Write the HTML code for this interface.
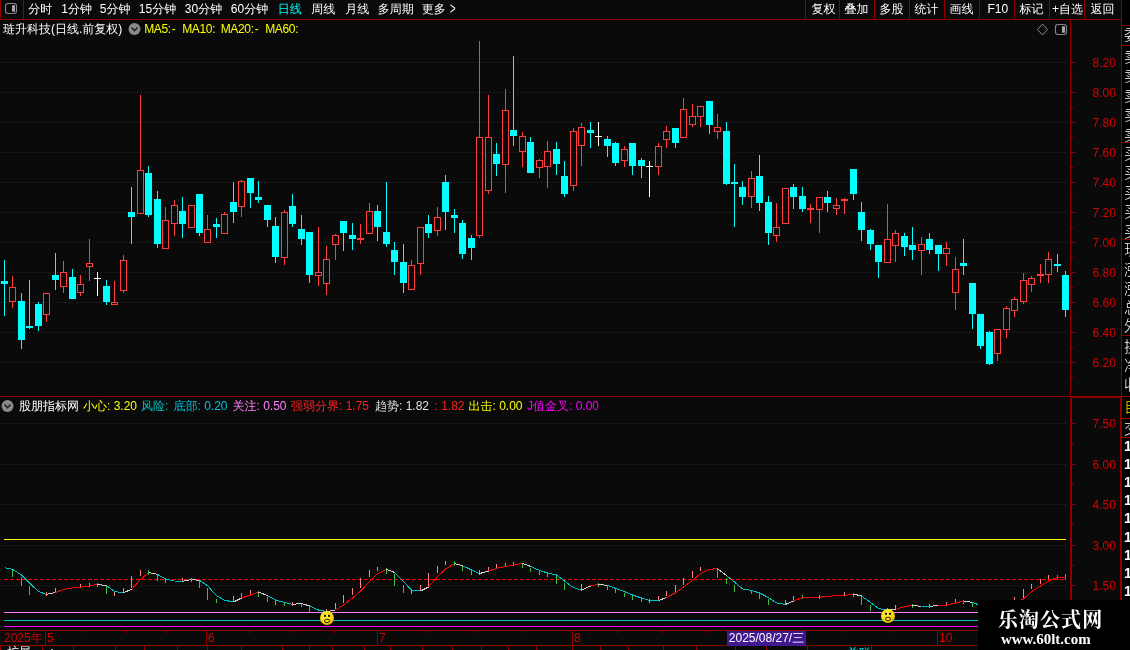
<!DOCTYPE html>
<html lang="zh-CN"><head><meta charset="utf-8"><title>琏升科技 日线</title>
<style>
html,body{margin:0;padding:0;background:#0a0a0a;}
body{width:1130px;height:650px;position:relative;overflow:hidden;font-family:"Liberation Sans","WenQuanYi Zen Hei",sans-serif;}
#chart{position:absolute;left:0;top:0;}
#txt{position:absolute;left:0;top:0;width:1130px;height:650px;will-change:transform;}
.t i{font-style:normal;margin-left:1px}
.t{position:absolute;font-size:12px;line-height:15px;white-space:nowrap;}
#side{position:absolute;left:1122px;top:0;width:8px;height:650px;background:#000;overflow:hidden;}
.s{position:absolute;left:2px;line-height:19px;white-space:nowrap;font-weight:300;font-family:"Liberation Sans","Noto Sans CJK SC",sans-serif;}
#wm{position:absolute;left:978px;top:600px;width:152px;height:50px;background:#000;color:#fff;}
.g{position:absolute;left:0;top:0;width:100%;height:100%;will-change:transform;}
#wm .a{position:absolute;left:19.8px;top:6px;font:bold 20px/28px "Liberation Serif","Noto Serif CJK SC",serif;letter-spacing:1.1px;white-space:nowrap;}
#wm .b{position:absolute;left:23px;top:31px;font:bold 14.95px/17px "Liberation Serif",serif;white-space:nowrap;}
</style></head><body>
<div id="side"><div class="g">
<span class="s" style="top:25px;color:#fff;font-size:15px;">委</span>
<span class="s" style="top:47.0px;color:#fff;font-size:15px;">卖</span>
<span class="s" style="top:66.4px;color:#fff;font-size:15px;">卖</span>
<span class="s" style="top:85.8px;color:#fff;font-size:15px;">卖</span>
<span class="s" style="top:105.19999999999999px;color:#fff;font-size:15px;">卖</span>
<span class="s" style="top:124.6px;color:#fff;font-size:15px;">卖</span>
<span class="s" style="top:144.0px;color:#fff;font-size:15px;">买</span>
<span class="s" style="top:163.4px;color:#fff;font-size:15px;">买</span>
<span class="s" style="top:182.8px;color:#fff;font-size:15px;">买</span>
<span class="s" style="top:202.2px;color:#fff;font-size:15px;">买</span>
<span class="s" style="top:221.6px;color:#fff;font-size:15px;">买</span>
<span class="s" style="top:240px;color:#fff;font-size:15px;">现</span>
<span class="s" style="top:259.5px;color:#fff;font-size:15px;">涨</span>
<span class="s" style="top:279px;color:#fff;font-size:15px;">涨</span>
<span class="s" style="top:298px;color:#fff;font-size:15px;">总</span>
<span class="s" style="top:316px;color:#fff;font-size:15px;">外</span>
<span class="s" style="top:337px;color:#fff;font-size:15px;">换</span>
<span class="s" style="top:356px;color:#fff;font-size:15px;">净</span>
<span class="s" style="top:375px;color:#fff;font-size:15px;">收</span>
<span class="s" style="top:397px;color:#e8e800;font-size:15px;">自</span>
<span class="s" style="top:418.5px;color:#fff;font-size:15px;">交</span>
<span class="s" style="top:437.0px;color:#fff;font-size:14px;font-weight:bold;">1</span>
<span class="s" style="top:455.1px;color:#fff;font-size:14px;font-weight:bold;">1</span>
<span class="s" style="top:473.2px;color:#fff;font-size:14px;font-weight:bold;">1</span>
<span class="s" style="top:491.3px;color:#fff;font-size:14px;font-weight:bold;">1</span>
<span class="s" style="top:509.4px;color:#fff;font-size:14px;font-weight:bold;">1</span>
<span class="s" style="top:527.5px;color:#fff;font-size:14px;font-weight:bold;">1</span>
<span class="s" style="top:545.6px;color:#fff;font-size:14px;font-weight:bold;">1</span>
<span class="s" style="top:563.7px;color:#fff;font-size:14px;font-weight:bold;">1</span>
<span class="s" style="top:581.8px;color:#fff;font-size:14px;font-weight:bold;">1</span>
</div></div>
<svg id="chart" width="1130" height="650" viewBox="0 0 1130 650">
<g stroke="#a00000" stroke-width="1" stroke-dasharray="1 3" shape-rendering="crispEdges">
<line x1="1" y1="62.5" x2="1067" y2="62.5"/>
<line x1="1" y1="92.5" x2="1067" y2="92.5"/>
<line x1="1" y1="122.5" x2="1067" y2="122.5"/>
<line x1="1" y1="152.5" x2="1067" y2="152.5"/>
<line x1="1" y1="182.5" x2="1067" y2="182.5"/>
<line x1="1" y1="212.5" x2="1067" y2="212.5"/>
<line x1="1" y1="242.5" x2="1067" y2="242.5"/>
<line x1="1" y1="272.5" x2="1067" y2="272.5"/>
<line x1="1" y1="302.5" x2="1067" y2="302.5"/>
<line x1="1" y1="332.5" x2="1067" y2="332.5"/>
<line x1="1" y1="362.5" x2="1067" y2="362.5"/>
<line x1="1" y1="423.5" x2="1067" y2="423.5"/>
<line x1="1" y1="464.5" x2="1067" y2="464.5"/>
<line x1="1" y1="504.5" x2="1067" y2="504.5"/>
<line x1="1" y1="545.5" x2="1067" y2="545.5"/>
<line x1="1" y1="585.5" x2="1067" y2="585.5"/>
</g>
<g fill="#8c0000" shape-rendering="crispEdges">
<rect x="0" y="19" width="1122" height="1" fill="#8c0000"/>
<rect x="0" y="0" width="1" height="20" fill="#8c0000"/>
<rect x="23" y="0" width="1" height="20" fill="#8c0000"/>
<rect x="805" y="0" width="1" height="20" fill="#8c0000"/>
<rect x="839" y="0" width="1" height="20" fill="#8c0000"/>
<rect x="874" y="0" width="1" height="20" fill="#8c0000"/>
<rect x="909" y="0" width="1" height="20" fill="#8c0000"/>
<rect x="944" y="0" width="1" height="20" fill="#8c0000"/>
<rect x="979" y="0" width="1" height="20" fill="#8c0000"/>
<rect x="1014" y="0" width="1" height="20" fill="#8c0000"/>
<rect x="1049" y="0" width="1" height="20" fill="#8c0000"/>
<rect x="1084" y="0" width="1" height="20" fill="#8c0000"/>
<rect x="1121" y="0" width="1" height="396" fill="#8c0000"/>
<rect x="1070" y="20" width="1" height="376" fill="#8c0000"/>
<rect x="1071" y="62" width="5" height="1" fill="#8c0000"/>
<rect x="1071" y="77" width="2" height="1" fill="#8c0000"/>
<rect x="1071" y="92" width="5" height="1" fill="#8c0000"/>
<rect x="1071" y="107" width="2" height="1" fill="#8c0000"/>
<rect x="1071" y="122" width="5" height="1" fill="#8c0000"/>
<rect x="1071" y="137" width="2" height="1" fill="#8c0000"/>
<rect x="1071" y="152" width="5" height="1" fill="#8c0000"/>
<rect x="1071" y="167" width="2" height="1" fill="#8c0000"/>
<rect x="1071" y="182" width="5" height="1" fill="#8c0000"/>
<rect x="1071" y="197" width="2" height="1" fill="#8c0000"/>
<rect x="1071" y="212" width="5" height="1" fill="#8c0000"/>
<rect x="1071" y="227" width="2" height="1" fill="#8c0000"/>
<rect x="1071" y="242" width="5" height="1" fill="#8c0000"/>
<rect x="1071" y="257" width="2" height="1" fill="#8c0000"/>
<rect x="1071" y="272" width="5" height="1" fill="#8c0000"/>
<rect x="1071" y="287" width="2" height="1" fill="#8c0000"/>
<rect x="1071" y="302" width="5" height="1" fill="#8c0000"/>
<rect x="1071" y="317" width="2" height="1" fill="#8c0000"/>
<rect x="1071" y="332" width="5" height="1" fill="#8c0000"/>
<rect x="1071" y="347" width="2" height="1" fill="#8c0000"/>
<rect x="1071" y="362" width="5" height="1" fill="#8c0000"/>
<rect x="1071" y="377" width="2" height="1" fill="#8c0000"/>
<rect x="0" y="396" width="1130" height="1" fill="#8c0000"/>
<rect x="1071" y="397" width="51" height="1" fill="#8c0000"/>
<rect x="1070" y="398" width="2" height="252" fill="#8c0000"/>
<rect x="1120" y="398" width="2" height="252" fill="#8c0000"/>
<rect x="1072" y="423" width="4" height="1" fill="#8c0000"/>
<rect x="1072" y="443" width="2" height="1" fill="#8c0000"/>
<rect x="1072" y="464" width="4" height="1" fill="#8c0000"/>
<rect x="1072" y="484" width="2" height="1" fill="#8c0000"/>
<rect x="1072" y="504" width="4" height="1" fill="#8c0000"/>
<rect x="1072" y="524" width="2" height="1" fill="#8c0000"/>
<rect x="1072" y="545" width="4" height="1" fill="#8c0000"/>
<rect x="1072" y="565" width="2" height="1" fill="#8c0000"/>
<rect x="1072" y="585" width="4" height="1" fill="#8c0000"/>
<rect x="1072" y="605" width="2" height="1" fill="#8c0000"/>
<rect x="0" y="630" width="1130" height="1" fill="#8c0000"/>
<rect x="0" y="645" width="1130" height="1" fill="#8c0000"/>
<rect x="45" y="630" width="1" height="16" fill="#8c0000"/>
<rect x="206" y="630" width="1" height="16" fill="#8c0000"/>
<rect x="377" y="630" width="1" height="16" fill="#8c0000"/>
<rect x="572" y="630" width="1" height="16" fill="#8c0000"/>
<rect x="937" y="630" width="1" height="16" fill="#8c0000"/>
<rect x="85" y="631" width="1" height="2" fill="#8c0000"/>
<rect x="126" y="631" width="1" height="2" fill="#8c0000"/>
<rect x="166" y="631" width="1" height="2" fill="#8c0000"/>
<rect x="249" y="631" width="1" height="2" fill="#8c0000"/>
<rect x="292" y="631" width="1" height="2" fill="#8c0000"/>
<rect x="334" y="631" width="1" height="2" fill="#8c0000"/>
<rect x="426" y="631" width="1" height="2" fill="#8c0000"/>
<rect x="474" y="631" width="1" height="2" fill="#8c0000"/>
<rect x="523" y="631" width="1" height="2" fill="#8c0000"/>
<rect x="617" y="631" width="1" height="2" fill="#8c0000"/>
<rect x="662" y="631" width="1" height="2" fill="#8c0000"/>
<rect x="706" y="631" width="1" height="2" fill="#8c0000"/>
<rect x="845" y="631" width="1" height="2" fill="#8c0000"/>
<rect x="891" y="631" width="1" height="2" fill="#8c0000"/>
<rect x="0" y="646" width="1" height="4" fill="#8c0000"/>
<rect x="42" y="646" width="1" height="4" fill="#8c0000"/>
<rect x="73" y="646" width="1" height="4" fill="#8c0000"/>
<rect x="115" y="646" width="1" height="4" fill="#8c0000"/>
<rect x="144" y="646" width="1" height="4" fill="#8c0000"/>
<rect x="177" y="646" width="1" height="4" fill="#8c0000"/>
<rect x="207" y="646" width="1" height="4" fill="#8c0000"/>
<rect x="241" y="646" width="1" height="4" fill="#8c0000"/>
<rect x="282" y="646" width="1" height="4" fill="#8c0000"/>
<rect x="309" y="646" width="1" height="4" fill="#8c0000"/>
<rect x="332" y="646" width="1" height="4" fill="#8c0000"/>
<rect x="364" y="646" width="1" height="4" fill="#8c0000"/>
<rect x="390" y="646" width="1" height="4" fill="#8c0000"/>
<rect x="422" y="646" width="1" height="4" fill="#8c0000"/>
<rect x="452" y="646" width="1" height="4" fill="#8c0000"/>
<rect x="481" y="646" width="1" height="4" fill="#8c0000"/>
<rect x="508" y="646" width="1" height="4" fill="#8c0000"/>
<rect x="536" y="646" width="1" height="4" fill="#8c0000"/>
<rect x="572" y="646" width="1" height="4" fill="#8c0000"/>
<rect x="600" y="646" width="1" height="4" fill="#8c0000"/>
<rect x="628" y="646" width="1" height="4" fill="#8c0000"/>
<rect x="663" y="646" width="1" height="4" fill="#8c0000"/>
<rect x="696" y="646" width="1" height="4" fill="#8c0000"/>
<rect x="735" y="646" width="1" height="4" fill="#8c0000"/>
<rect x="766" y="646" width="1" height="4" fill="#8c0000"/>
<rect x="807" y="646" width="1" height="4" fill="#8c0000"/>
<rect x="871" y="646" width="1" height="4" fill="#8c0000"/>
<rect x="1122" y="25" width="8" height="1" fill="#8c0000"/>
<rect x="1122" y="45" width="8" height="1" fill="#8c0000"/>
<rect x="1122" y="142" width="8" height="1" fill="#8c0000"/>
<rect x="1122" y="239" width="8" height="1" fill="#8c0000"/>
<rect x="1122" y="335" width="8" height="1" fill="#8c0000"/>
<rect x="1122" y="396" width="8" height="1" fill="#8c0000"/>
<rect x="1122" y="418" width="8" height="1" fill="#8c0000"/>
<rect x="1122" y="437" width="8" height="1" fill="#8c0000"/>
</g>
<g shape-rendering="crispEdges">
<rect x="4" y="260" width="1" height="56" fill="#00ffff"/>
<rect x="1" y="281" width="7" height="3" fill="#00ffff"/>
<rect x="12" y="276" width="1" height="11" fill="#ff3d3d"/>
<rect x="12" y="302" width="1" height="6" fill="#ff3d3d"/>
<rect x="9.5" y="287.5" width="6" height="14" fill="none" stroke="#ff3d3d" stroke-width="1"/>
<rect x="21" y="293" width="1" height="56" fill="#00ffff"/>
<rect x="18" y="301" width="7" height="39" fill="#00ffff"/>
<rect x="29" y="280" width="1" height="49" fill="#00ffff"/>
<rect x="26" y="326" width="7" height="2" fill="#00ffff"/>
<rect x="38" y="302" width="1" height="29" fill="#00ffff"/>
<rect x="35" y="304" width="7" height="22" fill="#00ffff"/>
<rect x="46" y="315" width="1" height="7" fill="#ff3d3d"/>
<rect x="43.5" y="293.5" width="6" height="21" fill="none" stroke="#ff3d3d" stroke-width="1"/>
<rect x="55" y="253" width="1" height="37" fill="#00ffff"/>
<rect x="52" y="275" width="7" height="5" fill="#00ffff"/>
<rect x="63" y="261" width="1" height="11" fill="#ff3d3d"/>
<rect x="63" y="287" width="1" height="6" fill="#ff3d3d"/>
<rect x="60.5" y="272.5" width="6" height="14" fill="none" stroke="#ff3d3d" stroke-width="1"/>
<rect x="72" y="269" width="1" height="30" fill="#00ffff"/>
<rect x="69" y="277" width="7" height="22" fill="#00ffff"/>
<rect x="80" y="275" width="1" height="9" fill="#ff3d3d"/>
<rect x="80" y="293" width="1" height="3" fill="#ff3d3d"/>
<rect x="77.5" y="284.5" width="6" height="8" fill="none" stroke="#ff3d3d" stroke-width="1"/>
<rect x="89" y="239" width="1" height="24" fill="#ff3d3d"/>
<rect x="89" y="267" width="1" height="14" fill="#ff3d3d"/>
<rect x="86.5" y="263.5" width="6" height="3" fill="none" stroke="#ff3d3d" stroke-width="1"/>
<rect x="97" y="272" width="1" height="24" fill="#ffffff"/>
<rect x="94" y="278" width="7" height="1" fill="#ffffff"/>
<rect x="106" y="280" width="1" height="25" fill="#00ffff"/>
<rect x="103" y="286" width="7" height="16" fill="#00ffff"/>
<rect x="114" y="281" width="1" height="21" fill="#ff3d3d"/>
<rect x="111.5" y="302.5" width="6" height="2" fill="none" stroke="#ff3d3d" stroke-width="1"/>
<rect x="123" y="255" width="1" height="5" fill="#ff3d3d"/>
<rect x="123" y="291" width="1" height="2" fill="#ff3d3d"/>
<rect x="120.5" y="260.5" width="6" height="30" fill="none" stroke="#ff3d3d" stroke-width="1"/>
<rect x="131" y="187" width="1" height="57" fill="#00ffff"/>
<rect x="128" y="212" width="7" height="5" fill="#00ffff"/>
<rect x="140" y="95" width="1" height="75" fill="#ff3d3d"/>
<rect x="137.5" y="170.5" width="6" height="43" fill="none" stroke="#ff3d3d" stroke-width="1"/>
<rect x="148" y="166" width="1" height="51" fill="#00ffff"/>
<rect x="145" y="173" width="7" height="42" fill="#00ffff"/>
<rect x="157" y="191" width="1" height="57" fill="#00ffff"/>
<rect x="154" y="199" width="7" height="45" fill="#00ffff"/>
<rect x="165" y="207" width="1" height="13" fill="#ff3d3d"/>
<rect x="162.5" y="220.5" width="6" height="28" fill="none" stroke="#ff3d3d" stroke-width="1"/>
<rect x="174" y="200" width="1" height="5" fill="#ff3d3d"/>
<rect x="174" y="224" width="1" height="12" fill="#ff3d3d"/>
<rect x="171.5" y="205.5" width="6" height="18" fill="none" stroke="#ff3d3d" stroke-width="1"/>
<rect x="182" y="197" width="1" height="41" fill="#00ffff"/>
<rect x="179" y="211" width="7" height="13" fill="#00ffff"/>
<rect x="188.5" y="205.5" width="6" height="22" fill="none" stroke="#ff3d3d" stroke-width="1"/>
<rect x="199" y="194" width="1" height="42" fill="#00ffff"/>
<rect x="196" y="194" width="7" height="39" fill="#00ffff"/>
<rect x="207" y="215" width="1" height="14" fill="#ff3d3d"/>
<rect x="204.5" y="229.5" width="6" height="13" fill="none" stroke="#ff3d3d" stroke-width="1"/>
<rect x="216" y="218" width="1" height="20" fill="#00ffff"/>
<rect x="213" y="224" width="7" height="3" fill="#00ffff"/>
<rect x="224" y="212" width="1" height="2" fill="#ff3d3d"/>
<rect x="221.5" y="214.5" width="6" height="19" fill="none" stroke="#ff3d3d" stroke-width="1"/>
<rect x="233" y="182" width="1" height="41" fill="#00ffff"/>
<rect x="230" y="202" width="7" height="10" fill="#00ffff"/>
<rect x="241" y="180" width="1" height="1" fill="#ff3d3d"/>
<rect x="241" y="207" width="1" height="10" fill="#ff3d3d"/>
<rect x="238.5" y="181.5" width="6" height="25" fill="none" stroke="#ff3d3d" stroke-width="1"/>
<rect x="250" y="178" width="1" height="30" fill="#00ffff"/>
<rect x="247" y="178" width="7" height="15" fill="#00ffff"/>
<rect x="258" y="181" width="1" height="22" fill="#00ffff"/>
<rect x="255" y="197" width="7" height="3" fill="#00ffff"/>
<rect x="267" y="205" width="1" height="22" fill="#00ffff"/>
<rect x="264" y="205" width="7" height="15" fill="#00ffff"/>
<rect x="275" y="217" width="1" height="46" fill="#00ffff"/>
<rect x="272" y="226" width="7" height="31" fill="#00ffff"/>
<rect x="284" y="210" width="1" height="2" fill="#ff3d3d"/>
<rect x="284" y="258" width="1" height="7" fill="#ff3d3d"/>
<rect x="281.5" y="212.5" width="6" height="45" fill="none" stroke="#ff3d3d" stroke-width="1"/>
<rect x="292" y="194" width="1" height="33" fill="#00ffff"/>
<rect x="289" y="206" width="7" height="18" fill="#00ffff"/>
<rect x="301" y="215" width="1" height="30" fill="#00ffff"/>
<rect x="298" y="229" width="7" height="10" fill="#00ffff"/>
<rect x="309" y="232" width="1" height="51" fill="#00ffff"/>
<rect x="306" y="232" width="7" height="43" fill="#00ffff"/>
<rect x="318" y="227" width="1" height="45" fill="#ff3d3d"/>
<rect x="318" y="276" width="1" height="10" fill="#ff3d3d"/>
<rect x="315.5" y="272.5" width="6" height="3" fill="none" stroke="#ff3d3d" stroke-width="1"/>
<rect x="326" y="246" width="1" height="13" fill="#ff3d3d"/>
<rect x="326" y="284" width="1" height="11" fill="#ff3d3d"/>
<rect x="323.5" y="259.5" width="6" height="24" fill="none" stroke="#ff3d3d" stroke-width="1"/>
<rect x="335" y="234" width="1" height="1" fill="#ff3d3d"/>
<rect x="335" y="245" width="1" height="15" fill="#ff3d3d"/>
<rect x="332.5" y="235.5" width="6" height="9" fill="none" stroke="#ff3d3d" stroke-width="1"/>
<rect x="343" y="221" width="1" height="30" fill="#00ffff"/>
<rect x="340" y="221" width="7" height="12" fill="#00ffff"/>
<rect x="352" y="223" width="1" height="27" fill="#00ffff"/>
<rect x="349" y="235" width="7" height="4" fill="#00ffff"/>
<rect x="360" y="224" width="1" height="20" fill="#ff3d3d"/>
<rect x="357" y="238" width="7" height="2" fill="#ff3d3d"/>
<rect x="369" y="203" width="1" height="8" fill="#ff3d3d"/>
<rect x="366.5" y="211.5" width="6" height="22" fill="none" stroke="#ff3d3d" stroke-width="1"/>
<rect x="377" y="205" width="1" height="36" fill="#00ffff"/>
<rect x="374" y="211" width="7" height="16" fill="#00ffff"/>
<rect x="386" y="182" width="1" height="65" fill="#00ffff"/>
<rect x="383" y="232" width="7" height="12" fill="#00ffff"/>
<rect x="394" y="242" width="1" height="33" fill="#00ffff"/>
<rect x="391" y="250" width="7" height="12" fill="#00ffff"/>
<rect x="403" y="244" width="1" height="49" fill="#00ffff"/>
<rect x="400" y="262" width="7" height="21" fill="#00ffff"/>
<rect x="411" y="260" width="1" height="5" fill="#ff3d3d"/>
<rect x="408.5" y="265.5" width="6" height="24" fill="none" stroke="#ff3d3d" stroke-width="1"/>
<rect x="420" y="264" width="1" height="11" fill="#ff3d3d"/>
<rect x="417.5" y="227.5" width="6" height="36" fill="none" stroke="#ff3d3d" stroke-width="1"/>
<rect x="428" y="215" width="1" height="23" fill="#00ffff"/>
<rect x="425" y="224" width="7" height="9" fill="#00ffff"/>
<rect x="437" y="207" width="1" height="10" fill="#ff3d3d"/>
<rect x="437" y="231" width="1" height="5" fill="#ff3d3d"/>
<rect x="434.5" y="217.5" width="6" height="13" fill="none" stroke="#ff3d3d" stroke-width="1"/>
<rect x="445" y="175" width="1" height="55" fill="#00ffff"/>
<rect x="442" y="182" width="7" height="30" fill="#00ffff"/>
<rect x="454" y="209" width="1" height="24" fill="#00ffff"/>
<rect x="451" y="215" width="7" height="3" fill="#00ffff"/>
<rect x="462" y="220" width="1" height="39" fill="#00ffff"/>
<rect x="459" y="223" width="7" height="31" fill="#00ffff"/>
<rect x="471" y="235" width="1" height="25" fill="#00ffff"/>
<rect x="468" y="238" width="7" height="10" fill="#00ffff"/>
<rect x="479" y="41" width="1" height="96" fill="#ff3d3d"/>
<rect x="479" y="236" width="1" height="2" fill="#ff3d3d"/>
<rect x="476.5" y="137.5" width="6" height="98" fill="none" stroke="#ff3d3d" stroke-width="1"/>
<rect x="488" y="95" width="1" height="42" fill="#ff3d3d"/>
<rect x="488" y="191" width="1" height="3" fill="#ff3d3d"/>
<rect x="485.5" y="137.5" width="6" height="53" fill="none" stroke="#ff3d3d" stroke-width="1"/>
<rect x="496" y="143" width="1" height="33" fill="#00ffff"/>
<rect x="493" y="154" width="7" height="10" fill="#00ffff"/>
<rect x="505" y="89" width="1" height="21" fill="#ff3d3d"/>
<rect x="505" y="165" width="1" height="28" fill="#ff3d3d"/>
<rect x="502.5" y="110.5" width="6" height="54" fill="none" stroke="#ff3d3d" stroke-width="1"/>
<rect x="513" y="56" width="1" height="90" fill="#00ffff"/>
<rect x="510" y="130" width="7" height="6" fill="#00ffff"/>
<rect x="522" y="132" width="1" height="4" fill="#ff3d3d"/>
<rect x="522" y="152" width="1" height="15" fill="#ff3d3d"/>
<rect x="519.5" y="136.5" width="6" height="15" fill="none" stroke="#ff3d3d" stroke-width="1"/>
<rect x="530" y="137" width="1" height="36" fill="#00ffff"/>
<rect x="527" y="142" width="7" height="31" fill="#00ffff"/>
<rect x="539" y="159" width="1" height="1" fill="#ff3d3d"/>
<rect x="539" y="168" width="1" height="10" fill="#ff3d3d"/>
<rect x="536.5" y="160.5" width="6" height="7" fill="none" stroke="#ff3d3d" stroke-width="1"/>
<rect x="547" y="141" width="1" height="10" fill="#ff3d3d"/>
<rect x="547" y="167" width="1" height="21" fill="#ff3d3d"/>
<rect x="544.5" y="151.5" width="6" height="15" fill="none" stroke="#ff3d3d" stroke-width="1"/>
<rect x="556" y="142" width="1" height="33" fill="#00ffff"/>
<rect x="553" y="149" width="7" height="15" fill="#00ffff"/>
<rect x="564" y="161" width="1" height="36" fill="#00ffff"/>
<rect x="561" y="176" width="7" height="18" fill="#00ffff"/>
<rect x="573" y="128" width="1" height="3" fill="#ff3d3d"/>
<rect x="573" y="186" width="1" height="5" fill="#ff3d3d"/>
<rect x="570.5" y="131.5" width="6" height="54" fill="none" stroke="#ff3d3d" stroke-width="1"/>
<rect x="581" y="123" width="1" height="4" fill="#ff3d3d"/>
<rect x="581" y="146" width="1" height="20" fill="#ff3d3d"/>
<rect x="578.5" y="127.5" width="6" height="18" fill="none" stroke="#ff3d3d" stroke-width="1"/>
<rect x="590" y="122" width="1" height="26" fill="#00ffff"/>
<rect x="587" y="130" width="7" height="3" fill="#00ffff"/>
<rect x="598" y="122" width="1" height="24" fill="#ffffff"/>
<rect x="595" y="136" width="7" height="1" fill="#ffffff"/>
<rect x="607" y="136" width="1" height="21" fill="#00ffff"/>
<rect x="604" y="139" width="7" height="7" fill="#00ffff"/>
<rect x="615" y="142" width="1" height="24" fill="#00ffff"/>
<rect x="612" y="143" width="7" height="20" fill="#00ffff"/>
<rect x="624" y="146" width="1" height="3" fill="#ff3d3d"/>
<rect x="624" y="161" width="1" height="6" fill="#ff3d3d"/>
<rect x="621.5" y="149.5" width="6" height="11" fill="none" stroke="#ff3d3d" stroke-width="1"/>
<rect x="632" y="143" width="1" height="32" fill="#00ffff"/>
<rect x="629" y="143" width="7" height="23" fill="#00ffff"/>
<rect x="641" y="158" width="1" height="20" fill="#00ffff"/>
<rect x="638" y="160" width="7" height="6" fill="#00ffff"/>
<rect x="649" y="161" width="1" height="36" fill="#ffffff"/>
<rect x="646" y="166" width="7" height="1" fill="#ffffff"/>
<rect x="658" y="143" width="1" height="3" fill="#ff3d3d"/>
<rect x="658" y="167" width="1" height="8" fill="#ff3d3d"/>
<rect x="655.5" y="146.5" width="6" height="20" fill="none" stroke="#ff3d3d" stroke-width="1"/>
<rect x="666" y="126" width="1" height="5" fill="#ff3d3d"/>
<rect x="666" y="140" width="1" height="8" fill="#ff3d3d"/>
<rect x="663.5" y="131.5" width="6" height="8" fill="none" stroke="#ff3d3d" stroke-width="1"/>
<rect x="675" y="128" width="1" height="20" fill="#00ffff"/>
<rect x="672" y="128" width="7" height="15" fill="#00ffff"/>
<rect x="683" y="98" width="1" height="11" fill="#ff3d3d"/>
<rect x="680.5" y="109.5" width="6" height="28" fill="none" stroke="#ff3d3d" stroke-width="1"/>
<rect x="692" y="104" width="1" height="12" fill="#ff3d3d"/>
<rect x="692" y="125" width="1" height="2" fill="#ff3d3d"/>
<rect x="689.5" y="116.5" width="6" height="8" fill="none" stroke="#ff3d3d" stroke-width="1"/>
<rect x="700" y="117" width="1" height="10" fill="#ff3d3d"/>
<rect x="697.5" y="106.5" width="6" height="10" fill="none" stroke="#ff3d3d" stroke-width="1"/>
<rect x="709" y="101" width="1" height="33" fill="#00ffff"/>
<rect x="706" y="101" width="7" height="24" fill="#00ffff"/>
<rect x="717" y="114" width="1" height="13" fill="#ff3d3d"/>
<rect x="717" y="132" width="1" height="7" fill="#ff3d3d"/>
<rect x="714.5" y="127.5" width="6" height="4" fill="none" stroke="#ff3d3d" stroke-width="1"/>
<rect x="726" y="122" width="1" height="63" fill="#00ffff"/>
<rect x="723" y="131" width="7" height="53" fill="#00ffff"/>
<rect x="734" y="164" width="1" height="63" fill="#00ffff"/>
<rect x="731" y="182" width="7" height="2" fill="#00ffff"/>
<rect x="742" y="181" width="1" height="24" fill="#00ffff"/>
<rect x="739" y="187" width="7" height="10" fill="#00ffff"/>
<rect x="751" y="171" width="1" height="7" fill="#ff3d3d"/>
<rect x="751" y="197" width="1" height="11" fill="#ff3d3d"/>
<rect x="748.5" y="178.5" width="6" height="18" fill="none" stroke="#ff3d3d" stroke-width="1"/>
<rect x="759" y="155" width="1" height="56" fill="#00ffff"/>
<rect x="756" y="176" width="7" height="27" fill="#00ffff"/>
<rect x="768" y="196" width="1" height="49" fill="#00ffff"/>
<rect x="765" y="202" width="7" height="31" fill="#00ffff"/>
<rect x="776" y="203" width="1" height="24" fill="#ff3d3d"/>
<rect x="776" y="236" width="1" height="6" fill="#ff3d3d"/>
<rect x="773.5" y="227.5" width="6" height="8" fill="none" stroke="#ff3d3d" stroke-width="1"/>
<rect x="782.5" y="188.5" width="6" height="35" fill="none" stroke="#ff3d3d" stroke-width="1"/>
<rect x="793" y="184" width="1" height="25" fill="#00ffff"/>
<rect x="790" y="187" width="7" height="10" fill="#00ffff"/>
<rect x="802" y="187" width="1" height="25" fill="#00ffff"/>
<rect x="799" y="196" width="7" height="13" fill="#00ffff"/>
<rect x="810" y="204" width="1" height="19" fill="#ff3d3d"/>
<rect x="807" y="208" width="7" height="2" fill="#ff3d3d"/>
<rect x="819" y="210" width="1" height="23" fill="#ff3d3d"/>
<rect x="816.5" y="197.5" width="6" height="12" fill="none" stroke="#ff3d3d" stroke-width="1"/>
<rect x="827" y="191" width="1" height="21" fill="#00ffff"/>
<rect x="824" y="197" width="7" height="6" fill="#00ffff"/>
<rect x="836" y="198" width="1" height="7" fill="#ff3d3d"/>
<rect x="836" y="209" width="1" height="6" fill="#ff3d3d"/>
<rect x="833.5" y="205.5" width="6" height="3" fill="none" stroke="#ff3d3d" stroke-width="1"/>
<rect x="844" y="198" width="1" height="16" fill="#ff3d3d"/>
<rect x="841" y="199" width="7" height="2" fill="#ff3d3d"/>
<rect x="853" y="169" width="1" height="31" fill="#00ffff"/>
<rect x="850" y="169" width="7" height="25" fill="#00ffff"/>
<rect x="861" y="202" width="1" height="39" fill="#00ffff"/>
<rect x="858" y="212" width="7" height="18" fill="#00ffff"/>
<rect x="870" y="229" width="1" height="21" fill="#00ffff"/>
<rect x="867" y="230" width="7" height="14" fill="#00ffff"/>
<rect x="878" y="245" width="1" height="33" fill="#00ffff"/>
<rect x="875" y="245" width="7" height="17" fill="#00ffff"/>
<rect x="887" y="204" width="1" height="35" fill="#ff3d3d"/>
<rect x="884.5" y="239.5" width="6" height="23" fill="none" stroke="#ff3d3d" stroke-width="1"/>
<rect x="895" y="230" width="1" height="3" fill="#ff3d3d"/>
<rect x="895" y="246" width="1" height="16" fill="#ff3d3d"/>
<rect x="892.5" y="233.5" width="6" height="12" fill="none" stroke="#ff3d3d" stroke-width="1"/>
<rect x="904" y="233" width="1" height="23" fill="#00ffff"/>
<rect x="901" y="236" width="7" height="11" fill="#00ffff"/>
<rect x="912" y="227" width="1" height="33" fill="#00ffff"/>
<rect x="909" y="245" width="7" height="5" fill="#00ffff"/>
<rect x="921" y="237" width="1" height="7" fill="#ff3d3d"/>
<rect x="921" y="251" width="1" height="24" fill="#ff3d3d"/>
<rect x="918.5" y="244.5" width="6" height="6" fill="none" stroke="#ff3d3d" stroke-width="1"/>
<rect x="929" y="233" width="1" height="21" fill="#00ffff"/>
<rect x="926" y="239" width="7" height="11" fill="#00ffff"/>
<rect x="938" y="245" width="1" height="26" fill="#00ffff"/>
<rect x="935" y="245" width="7" height="9" fill="#00ffff"/>
<rect x="946" y="242" width="1" height="6" fill="#ff3d3d"/>
<rect x="946" y="254" width="1" height="12" fill="#ff3d3d"/>
<rect x="943.5" y="248.5" width="6" height="5" fill="none" stroke="#ff3d3d" stroke-width="1"/>
<rect x="955" y="257" width="1" height="12" fill="#ff3d3d"/>
<rect x="955" y="293" width="1" height="17" fill="#ff3d3d"/>
<rect x="952.5" y="269.5" width="6" height="23" fill="none" stroke="#ff3d3d" stroke-width="1"/>
<rect x="963" y="239" width="1" height="36" fill="#00ffff"/>
<rect x="960" y="263" width="7" height="3" fill="#00ffff"/>
<rect x="972" y="283" width="1" height="46" fill="#00ffff"/>
<rect x="969" y="283" width="7" height="31" fill="#00ffff"/>
<rect x="980" y="314" width="1" height="35" fill="#00ffff"/>
<rect x="977" y="314" width="7" height="32" fill="#00ffff"/>
<rect x="989" y="331" width="1" height="34" fill="#00ffff"/>
<rect x="986" y="332" width="7" height="32" fill="#00ffff"/>
<rect x="997" y="354" width="1" height="7" fill="#ff3d3d"/>
<rect x="994.5" y="329.5" width="6" height="24" fill="none" stroke="#ff3d3d" stroke-width="1"/>
<rect x="1006" y="306" width="1" height="2" fill="#ff3d3d"/>
<rect x="1006" y="330" width="1" height="8" fill="#ff3d3d"/>
<rect x="1003.5" y="308.5" width="6" height="21" fill="none" stroke="#ff3d3d" stroke-width="1"/>
<rect x="1014" y="297" width="1" height="2" fill="#ff3d3d"/>
<rect x="1014" y="311" width="1" height="6" fill="#ff3d3d"/>
<rect x="1011.5" y="299.5" width="6" height="11" fill="none" stroke="#ff3d3d" stroke-width="1"/>
<rect x="1023" y="273" width="1" height="7" fill="#ff3d3d"/>
<rect x="1023" y="302" width="1" height="2" fill="#ff3d3d"/>
<rect x="1020.5" y="280.5" width="6" height="21" fill="none" stroke="#ff3d3d" stroke-width="1"/>
<rect x="1031" y="276" width="1" height="2" fill="#ff3d3d"/>
<rect x="1031" y="285" width="1" height="7" fill="#ff3d3d"/>
<rect x="1028.5" y="278.5" width="6" height="6" fill="none" stroke="#ff3d3d" stroke-width="1"/>
<rect x="1040" y="264" width="1" height="19" fill="#ff3d3d"/>
<rect x="1037" y="274" width="7" height="2" fill="#ff3d3d"/>
<rect x="1048" y="252" width="1" height="7" fill="#ff3d3d"/>
<rect x="1048" y="275" width="1" height="8" fill="#ff3d3d"/>
<rect x="1045.5" y="259.5" width="6" height="15" fill="none" stroke="#ff3d3d" stroke-width="1"/>
<rect x="1057" y="254" width="1" height="18" fill="#00ffff"/>
<rect x="1054" y="264" width="7" height="2" fill="#00ffff"/>
<rect x="1065" y="271" width="1" height="46" fill="#00ffff"/>
<rect x="1062" y="275" width="7" height="35" fill="#00ffff"/>
</g>
<g shape-rendering="crispEdges">
<rect x="4" y="539" width="1062" height="1" fill="#ffff00"/>
<rect x="4" y="612" width="1062" height="1" fill="#ff80ff"/>
<rect x="4" y="620" width="1062" height="1" fill="#00c0c0"/>
<rect x="4" y="626" width="1062" height="1" fill="#ff00ff"/>
</g>
<line x1="4" y1="579.5" x2="1066" y2="579.5" stroke="#ff0000" stroke-width="1" stroke-dasharray="4 2" shape-rendering="crispEdges"/>
<g shape-rendering="crispEdges">
<rect x="12" y="570" width="1" height="7" fill="#40c040"/>
<rect x="21" y="577" width="1" height="9" fill="#40c040"/>
<rect x="29" y="586" width="1" height="9" fill="#40c040"/>
<rect x="46" y="592" width="1" height="4" fill="#ff8080"/>
<rect x="55" y="588" width="1" height="4" fill="#ff8080"/>
<rect x="80" y="584" width="1" height="4" fill="#ff8080"/>
<rect x="89" y="583" width="1" height="4" fill="#ff8080"/>
<rect x="97" y="583" width="1" height="4" fill="#40c040"/>
<rect x="106" y="586" width="1" height="8" fill="#40c040"/>
<rect x="114" y="592" width="1" height="4" fill="#ff8080"/>
<rect x="123" y="588" width="1" height="5" fill="#ff8080"/>
<rect x="131" y="576" width="1" height="12" fill="#ff8080"/>
<rect x="140" y="570" width="1" height="6" fill="#ff8080"/>
<rect x="148" y="570" width="1" height="5" fill="#40c040"/>
<rect x="157" y="575" width="1" height="6" fill="#40c040"/>
<rect x="165" y="579" width="1" height="4" fill="#40c040"/>
<rect x="182" y="578" width="1" height="4" fill="#ff8080"/>
<rect x="191" y="578" width="1" height="4" fill="#40c040"/>
<rect x="199" y="581" width="1" height="7" fill="#40c040"/>
<rect x="207" y="588" width="1" height="12" fill="#40c040"/>
<rect x="216" y="599" width="1" height="4" fill="#40c040"/>
<rect x="233" y="596" width="1" height="6" fill="#ff8080"/>
<rect x="241" y="593" width="1" height="4" fill="#ff8080"/>
<rect x="250" y="590" width="1" height="4" fill="#ff8080"/>
<rect x="258" y="591" width="1" height="6" fill="#40c040"/>
<rect x="267" y="597" width="1" height="5" fill="#40c040"/>
<rect x="275" y="601" width="1" height="4" fill="#40c040"/>
<rect x="284" y="602" width="1" height="4" fill="#40c040"/>
<rect x="292" y="602" width="1" height="4" fill="#ff8080"/>
<rect x="301" y="603" width="1" height="4" fill="#40c040"/>
<rect x="309" y="607" width="1" height="5" fill="#40c040"/>
<rect x="326" y="609" width="1" height="4" fill="#ff8080"/>
<rect x="335" y="603" width="1" height="6" fill="#ff8080"/>
<rect x="343" y="595" width="1" height="8" fill="#ff8080"/>
<rect x="352" y="588" width="1" height="7" fill="#ff8080"/>
<rect x="360" y="578" width="1" height="10" fill="#ff8080"/>
<rect x="369" y="570" width="1" height="7" fill="#ff8080"/>
<rect x="377" y="567" width="1" height="4" fill="#ff8080"/>
<rect x="386" y="568" width="1" height="6" fill="#40c040"/>
<rect x="394" y="574" width="1" height="12" fill="#40c040"/>
<rect x="403" y="585" width="1" height="8" fill="#40c040"/>
<rect x="411" y="590" width="1" height="4" fill="#ff8080"/>
<rect x="420" y="585" width="1" height="6" fill="#ff8080"/>
<rect x="428" y="573" width="1" height="13" fill="#ff8080"/>
<rect x="437" y="566" width="1" height="7" fill="#ff8080"/>
<rect x="445" y="561" width="1" height="4" fill="#ff8080"/>
<rect x="454" y="561" width="1" height="5" fill="#40c040"/>
<rect x="462" y="566" width="1" height="5" fill="#40c040"/>
<rect x="471" y="571" width="1" height="4" fill="#40c040"/>
<rect x="479" y="570" width="1" height="5" fill="#ff8080"/>
<rect x="488" y="567" width="1" height="4" fill="#ff8080"/>
<rect x="496" y="564" width="1" height="4" fill="#ff8080"/>
<rect x="505" y="563" width="1" height="4" fill="#ff8080"/>
<rect x="513" y="562" width="1" height="4" fill="#ff8080"/>
<rect x="522" y="563" width="1" height="5" fill="#40c040"/>
<rect x="530" y="568" width="1" height="4" fill="#40c040"/>
<rect x="539" y="571" width="1" height="4" fill="#40c040"/>
<rect x="547" y="573" width="1" height="4" fill="#40c040"/>
<rect x="556" y="576" width="1" height="8" fill="#40c040"/>
<rect x="564" y="583" width="1" height="7" fill="#40c040"/>
<rect x="581" y="584" width="1" height="7" fill="#ff8080"/>
<rect x="598" y="583" width="1" height="4" fill="#40c040"/>
<rect x="607" y="586" width="1" height="4" fill="#40c040"/>
<rect x="615" y="589" width="1" height="4" fill="#40c040"/>
<rect x="624" y="593" width="1" height="4" fill="#40c040"/>
<rect x="632" y="596" width="1" height="4" fill="#40c040"/>
<rect x="641" y="598" width="1" height="4" fill="#40c040"/>
<rect x="649" y="599" width="1" height="4" fill="#ff8080"/>
<rect x="658" y="596" width="1" height="4" fill="#ff8080"/>
<rect x="666" y="591" width="1" height="5" fill="#ff8080"/>
<rect x="675" y="585" width="1" height="7" fill="#ff8080"/>
<rect x="683" y="578" width="1" height="7" fill="#ff8080"/>
<rect x="692" y="571" width="1" height="7" fill="#ff8080"/>
<rect x="700" y="567" width="1" height="4" fill="#ff8080"/>
<rect x="717" y="568" width="1" height="10" fill="#40c040"/>
<rect x="726" y="578" width="1" height="6" fill="#40c040"/>
<rect x="734" y="585" width="1" height="7" fill="#40c040"/>
<rect x="751" y="590" width="1" height="4" fill="#40c040"/>
<rect x="759" y="594" width="1" height="5" fill="#40c040"/>
<rect x="768" y="599" width="1" height="6" fill="#40c040"/>
<rect x="785" y="600" width="1" height="5" fill="#ff8080"/>
<rect x="793" y="596" width="1" height="4" fill="#ff8080"/>
<rect x="802" y="595" width="1" height="4" fill="#40c040"/>
<rect x="819" y="595" width="1" height="4" fill="#ff8080"/>
<rect x="844" y="592" width="1" height="4" fill="#ff8080"/>
<rect x="853" y="593" width="1" height="4" fill="#40c040"/>
<rect x="861" y="597" width="1" height="8" fill="#40c040"/>
<rect x="870" y="605" width="1" height="6" fill="#40c040"/>
<rect x="887" y="608" width="1" height="4" fill="#ff8080"/>
<rect x="895" y="605" width="1" height="4" fill="#ff8080"/>
<rect x="912" y="604" width="1" height="4" fill="#40c040"/>
<rect x="929" y="604" width="1" height="4" fill="#ff8080"/>
<rect x="946" y="602" width="1" height="4" fill="#ff8080"/>
<rect x="955" y="599" width="1" height="4" fill="#ff8080"/>
<rect x="963" y="600" width="1" height="4" fill="#40c040"/>
<rect x="972" y="603" width="1" height="4" fill="#40c040"/>
<rect x="980" y="606" width="1" height="4" fill="#40c040"/>
<rect x="997" y="606" width="1" height="4" fill="#ff8080"/>
<rect x="1006" y="601" width="1" height="5" fill="#ff8080"/>
<rect x="1014" y="597" width="1" height="4" fill="#ff8080"/>
<rect x="1023" y="589" width="1" height="9" fill="#ff8080"/>
<rect x="1031" y="584" width="1" height="5" fill="#ff8080"/>
<rect x="1040" y="579" width="1" height="5" fill="#ff8080"/>
<rect x="1048" y="575" width="1" height="4" fill="#ff8080"/>
<rect x="1057" y="575" width="1" height="4" fill="#40c040"/>
<rect x="1065" y="574" width="1" height="6" fill="#40c040"/>
</g>
<line x1="4.5" y1="567.6" x2="12.5" y2="569.4" stroke="#00c0c0" stroke-width="1" shape-rendering="crispEdges"/>
<line x1="12.5" y1="569.4" x2="21.5" y2="575" stroke="#00c0c0" stroke-width="1" shape-rendering="crispEdges"/>
<line x1="21.5" y1="575" x2="29.5" y2="583" stroke="#00c0c0" stroke-width="1" shape-rendering="crispEdges"/>
<line x1="29.5" y1="583" x2="38.5" y2="591.6" stroke="#00c0c0" stroke-width="1" shape-rendering="crispEdges"/>
<line x1="38.5" y1="591.6" x2="46.5" y2="594.4" stroke="#00c0c0" stroke-width="1" shape-rendering="crispEdges"/>
<line x1="46.5" y1="594.4" x2="55.5" y2="592.6" stroke="#d0d0d0" stroke-width="1" shape-rendering="crispEdges"/>
<line x1="55.5" y1="592.6" x2="63.5" y2="589.4" stroke="#ff0000" stroke-width="1" shape-rendering="crispEdges"/>
<line x1="63.5" y1="589.4" x2="72.5" y2="588" stroke="#ff0000" stroke-width="1" shape-rendering="crispEdges"/>
<line x1="72.5" y1="588" x2="80.5" y2="587.2" stroke="#ff0000" stroke-width="1" shape-rendering="crispEdges"/>
<line x1="80.5" y1="587.2" x2="89.5" y2="586" stroke="#ff0000" stroke-width="1" shape-rendering="crispEdges"/>
<line x1="89.5" y1="586" x2="97.5" y2="584.4" stroke="#ff0000" stroke-width="1" shape-rendering="crispEdges"/>
<line x1="97.5" y1="584.4" x2="106.5" y2="585.6" stroke="#d0d0d0" stroke-width="1" shape-rendering="crispEdges"/>
<line x1="106.5" y1="585.6" x2="114.5" y2="591.6" stroke="#00c0c0" stroke-width="1" shape-rendering="crispEdges"/>
<line x1="114.5" y1="591.6" x2="123.5" y2="592.6" stroke="#00c0c0" stroke-width="1" shape-rendering="crispEdges"/>
<line x1="123.5" y1="592.6" x2="131.5" y2="589.4" stroke="#d0d0d0" stroke-width="1" shape-rendering="crispEdges"/>
<line x1="131.5" y1="589.4" x2="140.5" y2="579.6" stroke="#ff0000" stroke-width="1" shape-rendering="crispEdges"/>
<line x1="140.5" y1="579.6" x2="148.5" y2="572.6" stroke="#ff0000" stroke-width="1" shape-rendering="crispEdges"/>
<line x1="148.5" y1="572.6" x2="157.5" y2="574.4" stroke="#d0d0d0" stroke-width="1" shape-rendering="crispEdges"/>
<line x1="157.5" y1="574.4" x2="165.5" y2="579" stroke="#00c0c0" stroke-width="1" shape-rendering="crispEdges"/>
<line x1="165.5" y1="579" x2="174.5" y2="581.2" stroke="#00c0c0" stroke-width="1" shape-rendering="crispEdges"/>
<line x1="174.5" y1="581.2" x2="182.5" y2="581.2" stroke="#00c0c0" stroke-width="1" shape-rendering="crispEdges"/>
<line x1="182.5" y1="581.2" x2="191.5" y2="579.6" stroke="#d0d0d0" stroke-width="1" shape-rendering="crispEdges"/>
<line x1="191.5" y1="579.6" x2="199.5" y2="580.4" stroke="#d0d0d0" stroke-width="1" shape-rendering="crispEdges"/>
<line x1="199.5" y1="580.4" x2="207.5" y2="585.6" stroke="#00c0c0" stroke-width="1" shape-rendering="crispEdges"/>
<line x1="207.5" y1="585.6" x2="216.5" y2="595.8" stroke="#00c0c0" stroke-width="1" shape-rendering="crispEdges"/>
<line x1="216.5" y1="595.8" x2="224.5" y2="600.2" stroke="#00c0c0" stroke-width="1" shape-rendering="crispEdges"/>
<line x1="224.5" y1="600.2" x2="233.5" y2="602" stroke="#00c0c0" stroke-width="1" shape-rendering="crispEdges"/>
<line x1="233.5" y1="602" x2="241.5" y2="598" stroke="#d0d0d0" stroke-width="1" shape-rendering="crispEdges"/>
<line x1="241.5" y1="598" x2="250.5" y2="595" stroke="#ff0000" stroke-width="1" shape-rendering="crispEdges"/>
<line x1="250.5" y1="595" x2="258.5" y2="592" stroke="#ff0000" stroke-width="1" shape-rendering="crispEdges"/>
<line x1="258.5" y1="592" x2="267.5" y2="595.6" stroke="#d0d0d0" stroke-width="1" shape-rendering="crispEdges"/>
<line x1="267.5" y1="595.6" x2="275.5" y2="600" stroke="#00c0c0" stroke-width="1" shape-rendering="crispEdges"/>
<line x1="275.5" y1="600" x2="284.5" y2="602.4" stroke="#00c0c0" stroke-width="1" shape-rendering="crispEdges"/>
<line x1="284.5" y1="602.4" x2="292.5" y2="604.4" stroke="#00c0c0" stroke-width="1" shape-rendering="crispEdges"/>
<line x1="292.5" y1="604.4" x2="301.5" y2="603.4" stroke="#d0d0d0" stroke-width="1" shape-rendering="crispEdges"/>
<line x1="301.5" y1="603.4" x2="309.5" y2="606" stroke="#d0d0d0" stroke-width="1" shape-rendering="crispEdges"/>
<line x1="309.5" y1="606" x2="318.5" y2="610" stroke="#00c0c0" stroke-width="1" shape-rendering="crispEdges"/>
<line x1="318.5" y1="610" x2="326.5" y2="611.6" stroke="#00c0c0" stroke-width="1" shape-rendering="crispEdges"/>
<line x1="326.5" y1="611.6" x2="335.5" y2="610" stroke="#d0d0d0" stroke-width="1" shape-rendering="crispEdges"/>
<line x1="335.5" y1="610" x2="343.5" y2="605" stroke="#ff0000" stroke-width="1" shape-rendering="crispEdges"/>
<line x1="343.5" y1="605" x2="352.5" y2="598" stroke="#ff0000" stroke-width="1" shape-rendering="crispEdges"/>
<line x1="352.5" y1="598" x2="360.5" y2="591" stroke="#ff0000" stroke-width="1" shape-rendering="crispEdges"/>
<line x1="360.5" y1="591" x2="369.5" y2="581.6" stroke="#ff0000" stroke-width="1" shape-rendering="crispEdges"/>
<line x1="369.5" y1="581.6" x2="377.5" y2="573.6" stroke="#ff0000" stroke-width="1" shape-rendering="crispEdges"/>
<line x1="377.5" y1="573.6" x2="386.5" y2="569.4" stroke="#ff0000" stroke-width="1" shape-rendering="crispEdges"/>
<line x1="386.5" y1="569.4" x2="394.5" y2="572.4" stroke="#d0d0d0" stroke-width="1" shape-rendering="crispEdges"/>
<line x1="394.5" y1="572.4" x2="403.5" y2="581.6" stroke="#00c0c0" stroke-width="1" shape-rendering="crispEdges"/>
<line x1="403.5" y1="581.6" x2="411.5" y2="590" stroke="#00c0c0" stroke-width="1" shape-rendering="crispEdges"/>
<line x1="411.5" y1="590" x2="420.5" y2="591" stroke="#00c0c0" stroke-width="1" shape-rendering="crispEdges"/>
<line x1="420.5" y1="591" x2="428.5" y2="587" stroke="#d0d0d0" stroke-width="1" shape-rendering="crispEdges"/>
<line x1="428.5" y1="587" x2="437.5" y2="576.7" stroke="#ff0000" stroke-width="1" shape-rendering="crispEdges"/>
<line x1="437.5" y1="576.7" x2="445.5" y2="569" stroke="#ff0000" stroke-width="1" shape-rendering="crispEdges"/>
<line x1="445.5" y1="569" x2="454.5" y2="563.6" stroke="#ff0000" stroke-width="1" shape-rendering="crispEdges"/>
<line x1="454.5" y1="563.6" x2="462.5" y2="565.6" stroke="#d0d0d0" stroke-width="1" shape-rendering="crispEdges"/>
<line x1="462.5" y1="565.6" x2="471.5" y2="570" stroke="#00c0c0" stroke-width="1" shape-rendering="crispEdges"/>
<line x1="471.5" y1="570" x2="479.5" y2="573.6" stroke="#00c0c0" stroke-width="1" shape-rendering="crispEdges"/>
<line x1="479.5" y1="573.6" x2="488.5" y2="571" stroke="#d0d0d0" stroke-width="1" shape-rendering="crispEdges"/>
<line x1="488.5" y1="571" x2="496.5" y2="568.4" stroke="#ff0000" stroke-width="1" shape-rendering="crispEdges"/>
<line x1="496.5" y1="568.4" x2="505.5" y2="566.4" stroke="#ff0000" stroke-width="1" shape-rendering="crispEdges"/>
<line x1="505.5" y1="566.4" x2="513.5" y2="565" stroke="#ff0000" stroke-width="1" shape-rendering="crispEdges"/>
<line x1="513.5" y1="565" x2="522.5" y2="563.4" stroke="#ff0000" stroke-width="1" shape-rendering="crispEdges"/>
<line x1="522.5" y1="563.4" x2="530.5" y2="566.4" stroke="#d0d0d0" stroke-width="1" shape-rendering="crispEdges"/>
<line x1="530.5" y1="566.4" x2="539.5" y2="570.4" stroke="#00c0c0" stroke-width="1" shape-rendering="crispEdges"/>
<line x1="539.5" y1="570.4" x2="547.5" y2="573" stroke="#00c0c0" stroke-width="1" shape-rendering="crispEdges"/>
<line x1="547.5" y1="573" x2="556.5" y2="575" stroke="#00c0c0" stroke-width="1" shape-rendering="crispEdges"/>
<line x1="556.5" y1="575" x2="564.5" y2="581" stroke="#00c0c0" stroke-width="1" shape-rendering="crispEdges"/>
<line x1="564.5" y1="581" x2="573.5" y2="587.6" stroke="#00c0c0" stroke-width="1" shape-rendering="crispEdges"/>
<line x1="573.5" y1="587.6" x2="581.5" y2="590" stroke="#00c0c0" stroke-width="1" shape-rendering="crispEdges"/>
<line x1="581.5" y1="590" x2="590.5" y2="586" stroke="#d0d0d0" stroke-width="1" shape-rendering="crispEdges"/>
<line x1="590.5" y1="586" x2="598.5" y2="584.4" stroke="#ff0000" stroke-width="1" shape-rendering="crispEdges"/>
<line x1="598.5" y1="584.4" x2="607.5" y2="585.4" stroke="#d0d0d0" stroke-width="1" shape-rendering="crispEdges"/>
<line x1="607.5" y1="585.4" x2="615.5" y2="588.4" stroke="#00c0c0" stroke-width="1" shape-rendering="crispEdges"/>
<line x1="615.5" y1="588.4" x2="624.5" y2="591.6" stroke="#00c0c0" stroke-width="1" shape-rendering="crispEdges"/>
<line x1="624.5" y1="591.6" x2="632.5" y2="595" stroke="#00c0c0" stroke-width="1" shape-rendering="crispEdges"/>
<line x1="632.5" y1="595" x2="641.5" y2="598" stroke="#00c0c0" stroke-width="1" shape-rendering="crispEdges"/>
<line x1="641.5" y1="598" x2="649.5" y2="600.4" stroke="#00c0c0" stroke-width="1" shape-rendering="crispEdges"/>
<line x1="649.5" y1="600.4" x2="658.5" y2="600.4" stroke="#00c0c0" stroke-width="1" shape-rendering="crispEdges"/>
<line x1="658.5" y1="600.4" x2="666.5" y2="597.6" stroke="#d0d0d0" stroke-width="1" shape-rendering="crispEdges"/>
<line x1="666.5" y1="597.6" x2="675.5" y2="593" stroke="#ff0000" stroke-width="1" shape-rendering="crispEdges"/>
<line x1="675.5" y1="593" x2="683.5" y2="587" stroke="#ff0000" stroke-width="1" shape-rendering="crispEdges"/>
<line x1="683.5" y1="587" x2="692.5" y2="580.4" stroke="#ff0000" stroke-width="1" shape-rendering="crispEdges"/>
<line x1="692.5" y1="580.4" x2="700.5" y2="573.6" stroke="#ff0000" stroke-width="1" shape-rendering="crispEdges"/>
<line x1="700.5" y1="573.6" x2="709.5" y2="569.4" stroke="#ff0000" stroke-width="1" shape-rendering="crispEdges"/>
<line x1="709.5" y1="569.4" x2="717.5" y2="568.6" stroke="#ff0000" stroke-width="1" shape-rendering="crispEdges"/>
<line x1="717.5" y1="568.6" x2="726.5" y2="575.6" stroke="#d0d0d0" stroke-width="1" shape-rendering="crispEdges"/>
<line x1="726.5" y1="575.6" x2="734.5" y2="582" stroke="#00c0c0" stroke-width="1" shape-rendering="crispEdges"/>
<line x1="734.5" y1="582" x2="742.5" y2="589" stroke="#00c0c0" stroke-width="1" shape-rendering="crispEdges"/>
<line x1="742.5" y1="589" x2="751.5" y2="590.4" stroke="#00c0c0" stroke-width="1" shape-rendering="crispEdges"/>
<line x1="751.5" y1="590.4" x2="759.5" y2="593" stroke="#00c0c0" stroke-width="1" shape-rendering="crispEdges"/>
<line x1="759.5" y1="593" x2="768.5" y2="597.6" stroke="#00c0c0" stroke-width="1" shape-rendering="crispEdges"/>
<line x1="768.5" y1="597.6" x2="776.5" y2="603" stroke="#00c0c0" stroke-width="1" shape-rendering="crispEdges"/>
<line x1="776.5" y1="603" x2="785.5" y2="604.4" stroke="#00c0c0" stroke-width="1" shape-rendering="crispEdges"/>
<line x1="785.5" y1="604.4" x2="793.5" y2="601" stroke="#d0d0d0" stroke-width="1" shape-rendering="crispEdges"/>
<line x1="793.5" y1="601" x2="802.5" y2="597.4" stroke="#ff0000" stroke-width="1" shape-rendering="crispEdges"/>
<line x1="802.5" y1="597.4" x2="810.5" y2="597.4" stroke="#ff0000" stroke-width="1" shape-rendering="crispEdges"/>
<line x1="810.5" y1="597.4" x2="819.5" y2="597.2" stroke="#ff0000" stroke-width="1" shape-rendering="crispEdges"/>
<line x1="819.5" y1="597.2" x2="827.5" y2="596.4" stroke="#ff0000" stroke-width="1" shape-rendering="crispEdges"/>
<line x1="827.5" y1="596.4" x2="836.5" y2="595.6" stroke="#ff0000" stroke-width="1" shape-rendering="crispEdges"/>
<line x1="836.5" y1="595.6" x2="844.5" y2="595.4" stroke="#ff0000" stroke-width="1" shape-rendering="crispEdges"/>
<line x1="844.5" y1="595.4" x2="853.5" y2="594" stroke="#ff0000" stroke-width="1" shape-rendering="crispEdges"/>
<line x1="853.5" y1="594" x2="861.5" y2="596" stroke="#d0d0d0" stroke-width="1" shape-rendering="crispEdges"/>
<line x1="861.5" y1="596" x2="870.5" y2="602.4" stroke="#00c0c0" stroke-width="1" shape-rendering="crispEdges"/>
<line x1="870.5" y1="602.4" x2="878.5" y2="608.6" stroke="#00c0c0" stroke-width="1" shape-rendering="crispEdges"/>
<line x1="878.5" y1="608.6" x2="887.5" y2="610" stroke="#00c0c0" stroke-width="1" shape-rendering="crispEdges"/>
<line x1="887.5" y1="610" x2="895.5" y2="609.4" stroke="#d0d0d0" stroke-width="1" shape-rendering="crispEdges"/>
<line x1="895.5" y1="609.4" x2="904.5" y2="606.6" stroke="#ff0000" stroke-width="1" shape-rendering="crispEdges"/>
<line x1="904.5" y1="606.6" x2="912.5" y2="605.4" stroke="#ff0000" stroke-width="1" shape-rendering="crispEdges"/>
<line x1="912.5" y1="605.4" x2="921.5" y2="606.4" stroke="#d0d0d0" stroke-width="1" shape-rendering="crispEdges"/>
<line x1="921.5" y1="606.4" x2="929.5" y2="606.4" stroke="#00c0c0" stroke-width="1" shape-rendering="crispEdges"/>
<line x1="929.5" y1="606.4" x2="938.5" y2="605.4" stroke="#d0d0d0" stroke-width="1" shape-rendering="crispEdges"/>
<line x1="938.5" y1="605.4" x2="946.5" y2="605" stroke="#ff0000" stroke-width="1" shape-rendering="crispEdges"/>
<line x1="946.5" y1="605" x2="955.5" y2="603" stroke="#ff0000" stroke-width="1" shape-rendering="crispEdges"/>
<line x1="955.5" y1="603" x2="963.5" y2="601" stroke="#ff0000" stroke-width="1" shape-rendering="crispEdges"/>
<line x1="963.5" y1="601" x2="972.5" y2="602.4" stroke="#d0d0d0" stroke-width="1" shape-rendering="crispEdges"/>
<line x1="972.5" y1="602.4" x2="980.5" y2="605.6" stroke="#00c0c0" stroke-width="1" shape-rendering="crispEdges"/>
<line x1="980.5" y1="605.6" x2="989.5" y2="608" stroke="#00c0c0" stroke-width="1" shape-rendering="crispEdges"/>
<line x1="989.5" y1="608" x2="997.5" y2="609" stroke="#00c0c0" stroke-width="1" shape-rendering="crispEdges"/>
<line x1="997.5" y1="609" x2="1006.5" y2="607" stroke="#d0d0d0" stroke-width="1" shape-rendering="crispEdges"/>
<line x1="1006.5" y1="607" x2="1014.5" y2="603" stroke="#ff0000" stroke-width="1" shape-rendering="crispEdges"/>
<line x1="1014.5" y1="603" x2="1023.5" y2="599" stroke="#ff0000" stroke-width="1" shape-rendering="crispEdges"/>
<line x1="1023.5" y1="599" x2="1031.5" y2="591.6" stroke="#ff0000" stroke-width="1" shape-rendering="crispEdges"/>
<line x1="1031.5" y1="591.6" x2="1040.5" y2="586" stroke="#ff0000" stroke-width="1" shape-rendering="crispEdges"/>
<line x1="1040.5" y1="586" x2="1048.5" y2="581" stroke="#ff0000" stroke-width="1" shape-rendering="crispEdges"/>
<line x1="1048.5" y1="581" x2="1057.5" y2="577.4" stroke="#ff0000" stroke-width="1" shape-rendering="crispEdges"/>
<line x1="1057.5" y1="577.4" x2="1065.5" y2="577.4" stroke="#ff0000" stroke-width="1" shape-rendering="crispEdges"/>
<defs><radialGradient id="sg" cx="0.4" cy="0.35" r="0.7"><stop offset="0" stop-color="#ffee40"/><stop offset="0.6" stop-color="#ffd810"/><stop offset="1" stop-color="#d8a800"/></radialGradient></defs>
<g transform="translate(327,618)"><circle r="7" fill="url(#sg)"/><rect x="-3" y="-3.2" width="2" height="2" fill="#141000"/><rect x="1" y="-3.2" width="2" height="2" fill="#141000"/><ellipse cx="0" cy="2.9" rx="2.6" ry="1.7" fill="#ffe020" stroke="#141000" stroke-width="0.9"/></g>
<g transform="translate(888,616)"><circle r="7" fill="url(#sg)"/><rect x="-3" y="-3.2" width="2" height="2" fill="#141000"/><rect x="1" y="-3.2" width="2" height="2" fill="#141000"/><ellipse cx="0" cy="2.9" rx="2.6" ry="1.7" fill="#ffe020" stroke="#141000" stroke-width="0.9"/></g>
<rect x="5.5" y="3.5" width="11" height="10" rx="2.5" fill="none" stroke="#868686" stroke-width="1.1"/>
<rect x="12" y="5.3" width="3" height="6.4" fill="#a8a8a8"/>
<rect x="1055.5" y="24.5" width="11" height="10" rx="2.5" fill="none" stroke="#868686" stroke-width="1.1"/>
<rect x="1062" y="26.3" width="3" height="6.4" fill="#a8a8a8"/>
<path d="M1042.5 24 L1047.5 29.5 L1042.5 35 L1037.5 29.5 Z" fill="none" stroke="#8c8c8c" stroke-width="1"/>
<circle cx="134.5" cy="29" r="6" fill="#8a8a8a"/><path d="M131.5 27.5 L134.5 30.8 L137.5 27.5" fill="none" stroke="#1a1a1a" stroke-width="1.4"/>
<circle cx="7.5" cy="406" r="6" fill="#8a8a8a"/><path d="M4.5 404.5 L7.5 407.8 L10.5 404.5" fill="none" stroke="#1a1a1a" stroke-width="1.4"/>
</svg>
<div id="txt">
<span class="t" style="left:28.3px;top:2px;color:#ffffff;">分时</span>
<span class="t" style="left:61.3px;top:2px;color:#ffffff;">1分钟</span>
<span class="t" style="left:99.8px;top:2px;color:#ffffff;">5分钟</span>
<span class="t" style="left:138.8px;top:2px;color:#ffffff;">15分钟</span>
<span class="t" style="left:184.8px;top:2px;color:#ffffff;">30分钟</span>
<span class="t" style="left:230.8px;top:2px;color:#ffffff;">60分钟</span>
<span class="t" style="left:277.8px;top:2px;color:#00ffff;">日线</span>
<span class="t" style="left:311.3px;top:2px;color:#ffffff;">周线</span>
<span class="t" style="left:345.3px;top:2px;color:#ffffff;">月线</span>
<span class="t" style="left:377.8px;top:2px;color:#ffffff;">多周期</span>
<span class="t" style="left:421.8px;top:2px;color:#ffffff;">更多</span>
<span class="t" style="left:449.5px;top:2px;color:#ffffff;transform:scale(0.8,1.35);transform-origin:0 60%;">&gt;</span>
<span class="t" style="left:811.5px;top:2px;color:#fff;">复权</span>
<span class="t" style="left:844.5px;top:2px;color:#fff;">叠加</span>
<span class="t" style="left:879.5px;top:2px;color:#fff;">多股</span>
<span class="t" style="left:914.5px;top:2px;color:#fff;">统计</span>
<span class="t" style="left:949.5px;top:2px;color:#fff;">画线</span>
<span class="t" style="left:987.5px;top:2px;color:#fff;">F10</span>
<span class="t" style="left:1019.5px;top:2px;color:#fff;">标记</span>
<span class="t" style="left:1052px;top:2px;color:#fff;">+自选</span>
<span class="t" style="left:1090.5px;top:2px;color:#fff;">返回</span>
<span class="t" style="left:3px;top:22px;color:#fff;">琏升科技(日线.前复权)</span>
<span class="t" style="left:144.2px;top:22px;color:#ffff00;letter-spacing:-0.35px;">MA5:<i>-</i></span>
<span class="t" style="left:182.2px;top:22px;color:#ffff00;letter-spacing:-0.35px;">MA10:</span>
<span class="t" style="left:220.7px;top:22px;color:#ffff00;letter-spacing:-0.35px;">MA20:<i>-</i></span>
<span class="t" style="left:265.2px;top:22px;color:#ffff00;letter-spacing:-0.35px;">MA60:</span>
<span class="t" style="left:1092.5px;top:56px;color:#d80000;">8.20</span>
<span class="t" style="left:1092.5px;top:86px;color:#d80000;">8.00</span>
<span class="t" style="left:1092.5px;top:116px;color:#d80000;">7.80</span>
<span class="t" style="left:1092.5px;top:146px;color:#d80000;">7.60</span>
<span class="t" style="left:1092.5px;top:176px;color:#d80000;">7.40</span>
<span class="t" style="left:1092.5px;top:206px;color:#d80000;">7.20</span>
<span class="t" style="left:1092.5px;top:236px;color:#d80000;">7.00</span>
<span class="t" style="left:1092.5px;top:266px;color:#d80000;">6.80</span>
<span class="t" style="left:1092.5px;top:296px;color:#d80000;">6.60</span>
<span class="t" style="left:1092.5px;top:326px;color:#d80000;">6.40</span>
<span class="t" style="left:1092.5px;top:356px;color:#d80000;">6.20</span>
<span class="t" style="left:1092.5px;top:417px;color:#d80000;">7.50</span>
<span class="t" style="left:1092.5px;top:458px;color:#d80000;">6.00</span>
<span class="t" style="left:1092.5px;top:498px;color:#d80000;">4.50</span>
<span class="t" style="left:1092.5px;top:539px;color:#d80000;">3.00</span>
<span class="t" style="left:1092.5px;top:579px;color:#d80000;">1.50</span>
<span class="t" style="left:19px;top:399px;color:#fff;">股朋指标网</span>
<span class="t" style="left:83px;top:399px;color:#ffff00;">小心: 3.20</span>
<span class="t" style="left:141px;top:399px;color:#00c0c0;">风险:</span>
<span class="t" style="left:173.5px;top:399px;color:#00c0e0;">底部: 0.20</span>
<span class="t" style="left:232.5px;top:399px;color:#ff80ff;">关注: 0.50</span>
<span class="t" style="left:291px;top:399px;color:#ff2020;">强弱分界: 1.75</span>
<span class="t" style="left:375px;top:399px;color:#e0e0e0;">趋势: 1.82</span>
<span class="t" style="left:434.5px;top:399px;color:#ff2020;">: 1.82</span>
<span class="t" style="left:468.5px;top:399px;color:#ffff00;">出击: 0.00</span>
<span class="t" style="left:527px;top:399px;color:#ff00ff;">J值金叉: 0.00</span>
<span class="t" style="left:4px;top:631px;color:#d80000;">2025年</span>
<span class="t" style="left:47px;top:631px;color:#d80000;">5</span>
<span class="t" style="left:208px;top:631px;color:#d80000;">6</span>
<span class="t" style="left:379px;top:631px;color:#d80000;">7</span>
<span class="t" style="left:574px;top:631px;color:#d80000;">8</span>
<span class="t" style="left:939px;top:631px;color:#d80000;">10</span>
<span class="t" style="left:727px;top:631px;width:79px;height:15px;background:#40188f;color:#fff;text-align:center;line-height:14px">2025/08/27/三</span>
<span class="t" style="left:7px;top:645px;color:#fff;">扩展</span>
<span class="t" style="left:47px;top:645px;color:#fff;">∧</span>
<span class="t" style="left:847px;top:646px;color:#00e0e0;">关联</span>
</div>
<div id="wm"><div class="g"><span class="a">乐淘公式网</span><span class="b">www.60lt.com</span></div></div>
</body></html>
